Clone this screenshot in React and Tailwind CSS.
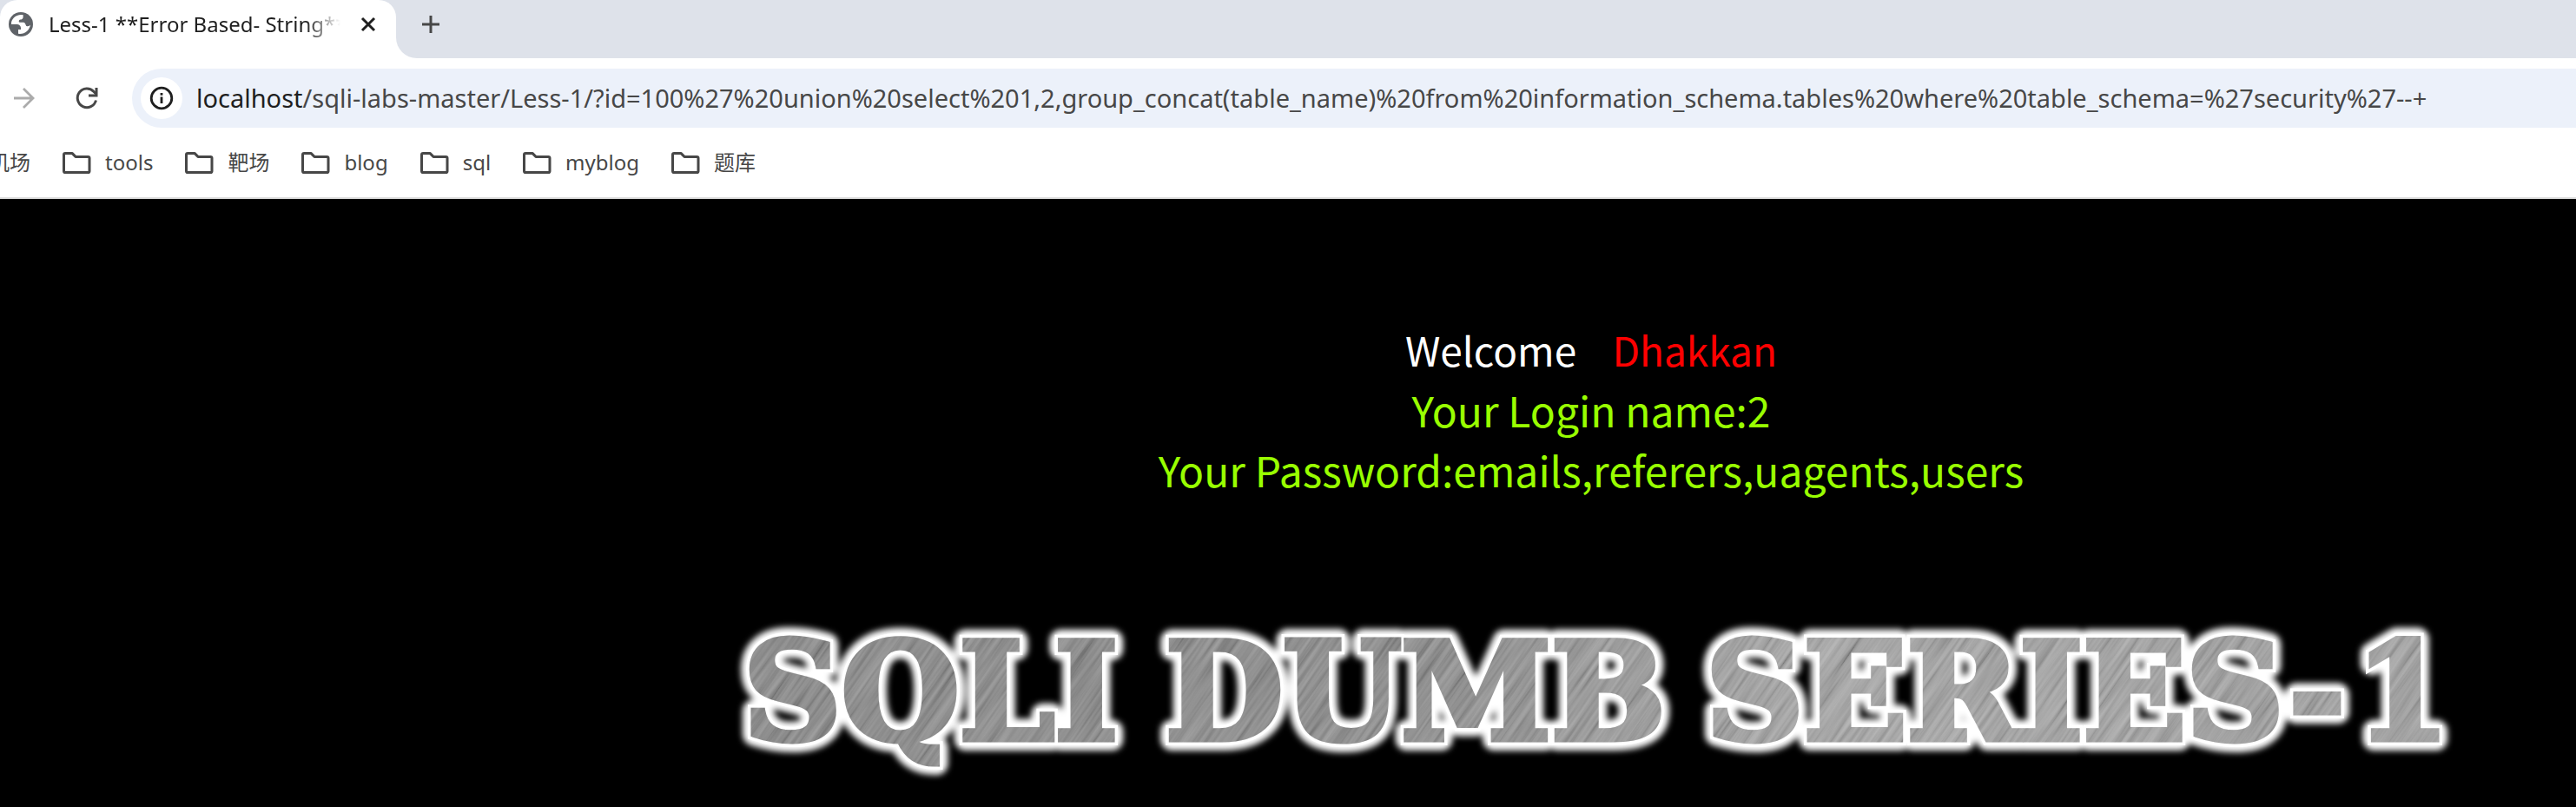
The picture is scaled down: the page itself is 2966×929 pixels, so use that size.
import React from "react";

const folders = ["tools", "靶场", "blog", "sql", "myblog", "题库"];

function FolderIcon() {
  return (
    <svg width="34" height="28" viewBox="0 0 34 28" fill="none" stroke="#474747" strokeWidth="3" strokeLinejoin="round">
      <path d="M2.500 5c0-1 .6-1.600 1.600-1.600H12l4 4h14.400c1 0 1.600.6 1.600 1.600v15c0 1-.6 1.600-1.600 1.600H4.100c-1 0-1.600-.6-1.600-1.600z" />
    </svg>
  );
}

function GlobeIcon() {
  return (
    <svg width="30" height="30" viewBox="0 0 30 30">
      <circle cx="15" cy="15" r="14" fill="#5f6368" />
      <path
        d="M17.500 4C9 3 3.500 9 4 15h6.500c2.500 0 4.500 2 4.500 4v2h-3v4.800C19 27 25 22 26 15.500c-1 1.500-2.500 2-4.500 1.500-1-.5-1-4-3.500-4.200h-4c-1.500 0-2-2.800.5-3.300h1C17.500 9 18 7 17.500 4z"
        fill="#fff"
      />
    </svg>
  );
}

function TabStrip() {
  return (
    <div className="flex h-[67px] bg-[#dee2ea]">
      <div className="flex w-[456px] shrink-0 items-center rounded-t-[20px] bg-white pb-[11px] pl-[9px]">
        <GlobeIcon />
        <div className="ml-[17px] w-[336px] overflow-hidden whitespace-nowrap bg-linear-to-r from-[#1f1f1f] from-88% to-transparent bg-clip-text text-[24px] leading-8 text-transparent">
          Less-1 **Error Based- String**
        </div>
        <button type="button" aria-label="Close tab" className="ml-[22px]">
          <svg width="20" height="20" viewBox="0 0 20 20" stroke="#1f1f1f" strokeWidth="3">
            <path d="M3 3l14 14M17 3L3 17" />
          </svg>
        </button>
      </div>
      <div className="w-6 bg-white">
        <div className="h-full rounded-bl-[24px] bg-[#dee2ea]" />
      </div>
      <button type="button" aria-label="New tab" className="ml-[4px] pb-[11px]">
        <svg width="24" height="24" viewBox="0 0 24 24" stroke="#474747" strokeWidth="3">
          <path d="M12 2v20M2 12h20" />
        </svg>
      </button>
    </div>
  );
}

function Toolbar() {
  return (
    <div className="flex items-center pt-3 pl-[14px]">
      <button type="button" aria-label="Forward">
        <svg width="28" height="28" viewBox="0 0 28 28" fill="none" stroke="#ababab" strokeWidth="2.800">
          <path d="M2 14h22M13 3l11 11-11 11" />
        </svg>
      </button>
      <button type="button" aria-label="Reload" className="ml-[44px]">
        <svg width="28" height="28" viewBox="0 0 28 28" fill="none" stroke="#474747" strokeWidth="3">
          <path d="M24.500 16.500A10.800 10.800 0 1 1 22 6.500L25 9.500" />
          <path d="M25 2v9H16" />
        </svg>
      </button>
      <div className="ml-[38px] flex h-[68px] flex-1 items-center rounded-l-full bg-[#ecf1fa] pl-[10px]">
        <button type="button" aria-label="Site information" className="flex size-12 items-center justify-center rounded-full bg-white">
          <svg width="28" height="28" viewBox="0 0 28 28" fill="none" stroke="#1f1f1f" strokeWidth="2.800">
            <circle cx="14" cy="14" r="11.800" />
            <path d="M14 12.500v7.500M14 8v2.800" />
          </svg>
        </button>
        <div className="ml-4 whitespace-nowrap text-[29px] text-[#474747]">
          <span className="text-[#1f1f1f]">localhost</span>
          /sqli-labs-master/Less-1/?id=100%27%20union%20select%201,2,group_concat(table_name)%20from%20information_schema.tables%20where%20table_schema=%27security%27--+
        </div>
      </div>
    </div>
  );
}

function Bookmarks() {
  return (
    <nav className="flex h-[82px] items-center gap-9 overflow-hidden border-b-2 border-[#dfdfdf] text-[24px] text-[#474747]">
      <a href="#airport" className="-ml-[13px] whitespace-nowrap">机场</a>
      {folders.map((name) => (
        <a key={name} href={`#${name}`} className="flex items-center gap-4 whitespace-nowrap">
          <FolderIcon />
          {name}
        </a>
      ))}
    </nav>
  );
}

function Banner() {
  const words = (
    <>
      <tspan x="24">SQLI</tspan>
      <tspan x="510">DUMB</tspan>
      <tspan x="1132">SERIES-</tspan>
      <tspan x="1880">1</tspan>
    </>
  );

  return (
    <svg
      viewBox="0 0 2000 200"
      className="mx-auto w-[2000px]"
      style={{ fontFamily: '"DejaVu Serif", serif', fontWeight: 700, fontSize: 156 }}
    >
      <defs>
        <linearGradient id="steel" x1="0" x2="2000" y1="0" y2="0" gradientUnits="userSpaceOnUse">
          <stop offset="0" stopColor="#808080" />
          <stop offset="0.4" stopColor="#848484" />
          <stop offset="0.62" stopColor="#a0a0a0" />
          <stop offset="1" stopColor="#999999" />
        </linearGradient>
        {/* long thin noise, rotated below into diagonal brush strokes */}
        <filter id="brushed" x="0" y="0" width="100%" height="100%">
          <feTurbulence type="fractalNoise" baseFrequency="0.008 0.22" numOctaves="3" seed="4" />
          <feColorMatrix values="1.400 0 0 0 -0.2  1.400 0 0 0 -0.2  1.400 0 0 0 -0.2  0 0 0 0 0.24" />
        </filter>
        <filter id="glow" x="-5%" y="-30%" width="110%" height="160%">
          <feGaussianBlur stdDeviation="3.500" />
        </filter>
        <mask id="lettering" maskUnits="userSpaceOnUse" x="0" y="0" width="2000" height="200">
          <text y="151" fill="#fff" stroke="#fff" strokeWidth="7">{words}</text>
        </mask>
      </defs>
      <text y="151" fill="#fff" stroke="#fff" strokeWidth="26" strokeLinejoin="round" filter="url(#glow)">{words}</text>
      <text y="151" fill="#fff" stroke="#fff" strokeWidth="14">{words}</text>
      <g mask="url(#lettering)">
        <rect width="2000" height="200" fill="url(#steel)" />
        <g transform="rotate(-55 1000 100)">
          <rect x="0" y="-900" width="2000" height="2000" filter="url(#brushed)" />
        </g>
      </g>
    </svg>
  );
}

export default function App() {
  return (
    <div className="min-h-screen overflow-hidden bg-black font-['Noto_Sans','Noto_Sans_CJK_SC',sans-serif]">
      <header className="bg-white">
        <TabStrip />
        <Toolbar />
        <Bookmarks />
      </header>
      <main className="pl-[698px] pt-[139px] text-center font-['Noto_Sans_CJK_SC',sans-serif] text-[48px] leading-[69px] text-[#99ff00]">
        <p className="text-[46px] text-white">
          Welcome&nbsp;&nbsp;&nbsp;&nbsp;<span className="text-[#ff0000]">Dhakkan</span>
        </p>
        <p>Your Login name:2</p>
        <p>Your Password:emails,referers,uagents,users</p>
        <h1 className="mt-[125px]">
          <Banner />
        </h1>
      </main>
    </div>
  );
}
